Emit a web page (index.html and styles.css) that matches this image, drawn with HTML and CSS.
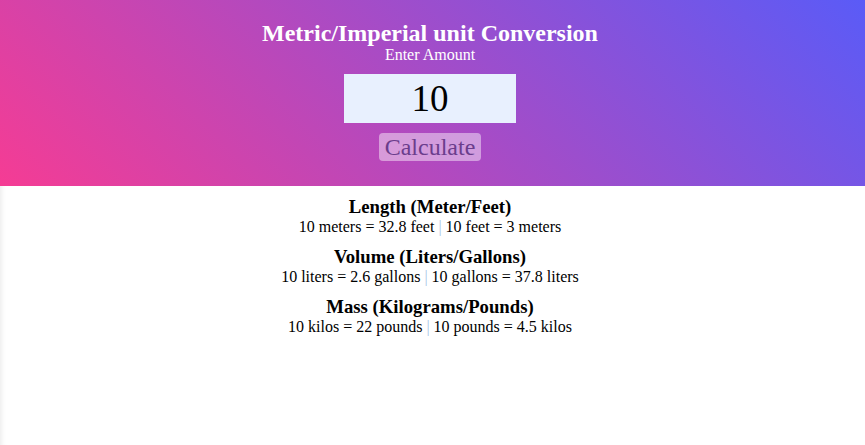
FILE: index.html
```html
<!DOCTYPE html>
<html>
<head>
<meta charset="utf-8">
<link rel="stylesheet" href="styles.css">
</head>
<body>
<header class="hero">
  <h1 class="title">Metric/Imperial unit Conversion</h1>
  <label class="label" for="amount">Enter Amount</label>
  <input id="amount" class="amount" type="text" value="10">
  <button class="calc">Calculate</button>
</header>
<main class="results">
  <section class="block">
    <h2 class="block-title">Length (Meter/Feet)</h2>
    <p class="block-text">10 meters = 32.8 feet <span class="sep">|</span> 10 feet = 3 meters</p>
  </section>
  <section class="block">
    <h2 class="block-title">Volume (Liters/Gallons)</h2>
    <p class="block-text">10 liters = 2.6 gallons <span class="sep">|</span> 10 gallons = 37.8 liters</p>
  </section>
  <section class="block">
    <h2 class="block-title">Mass (Kilograms/Pounds)</h2>
    <p class="block-text">10 kilos = 22 pounds <span class="sep">|</span> 10 pounds = 4.5 kilos</p>
  </section>
</main>
</body>
</html>
```

FILE: styles.css
```css
html, body {
  margin: 0;
  padding: 0;
  background: #fff;
  font-family: "Liberation Serif", "Times New Roman", serif;
}
.hero {
  height: 186px;
  box-sizing: border-box;
  padding-top: 20px;
  padding-right: 5px;
  display: flex;
  flex-direction: column;
  align-items: center;
  color: #fff;
  background: linear-gradient(45deg, #f53c94, #5a5bf7);
}
.title {
  margin: 0;
  font-size: 24px;
  line-height: 26px;
  font-weight: bold;
}
.label {
  font-size: 16px;
  line-height: 18px;
}
.amount {
  margin-top: 10px;
  width: 172px;
  height: 49px;
  box-sizing: border-box;
  border: none;
  outline: none;
  background: #e8f0fe;
  font-family: "Liberation Serif", serif;
  font-size: 37px;
  text-align: center;
  color: #000;
  padding: 0;
}
.calc {
  margin-top: 10px;
  width: 102px;
  height: 28px;
  border: none;
  border-radius: 4px;
  background: rgba(255, 255, 255, 0.45);
  color: #6b3d8c;
  font-family: "Liberation Serif", serif;
  font-size: 24px;
  line-height: 28px;
  padding: 0;
}
.results {
  padding-top: 10px;
  padding-right: 5px;
  display: flex;
  flex-direction: column;
  align-items: center;
  box-shadow: inset 6px 0 6px -6px rgba(0,0,0,0.12);
  min-height: 259px;
  box-sizing: border-box;
}
.block {
  text-align: center;
  margin-bottom: 10px;
}
.block-title {
  margin: 0;
  font-size: 18.72px;
  line-height: 22px;
  font-weight: bold;
}
.block-text {
  margin: 0;
  font-size: 16px;
  line-height: 18px;
}
.sep {
  color: #a6c6e6;
}
```
